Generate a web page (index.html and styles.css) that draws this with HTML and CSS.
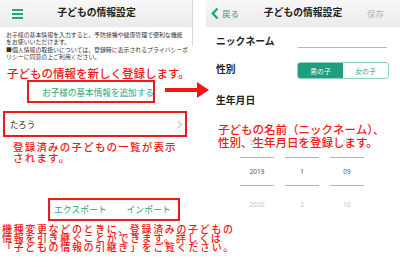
FILE: index.html
```html
<!DOCTYPE html>
<html lang="ja">
<head>
<meta charset="utf-8">
<link rel="stylesheet" href="styles.css">
</head>
<body>
<div class="stage">
  <section class="screen left">
    <header class="bar">
      <span class="bar-l">
        <svg class="menu" width="11" height="10" viewBox="0 0 11 10"><rect x="0" y="0" width="11" height="2" fill="#1fa582"/><rect x="0" y="4" width="11" height="2" fill="#1fa582"/><rect x="0" y="8" width="11" height="2" fill="#1fa582"/></svg>
      </span>
      <h1 class="title">子どもの情報設定</h1>
      <span class="bar-r"></span>
    </header>
    <p class="desc">お子様の基本情報を入力すると、予防接種や健康管理で便利な機能<br>をお使いいただけます。<br>■個人情報の取扱いについては、登録時に表示されるプライバシーポ<br>リシーに同意の上ご利用ください。</p>
    <div class="add">お子様の基本情報を追加する</div>
    <div class="child-row">
      <span>たろう</span>
      <svg width="6" height="9" viewBox="0 0 6 9"><polyline points="1,1 4.5,4.5 1,8" fill="none" stroke="#c4c4c4" stroke-width="1.2"/></svg>
    </div>
    <div class="links">
      <span>エクスポート</span>
      <span>インポート</span>
    </div>
    <div class="scroll"></div>
  </section>

  <section class="screen right">
    <header class="bar">
      <span class="bar-l back">
        <svg width="8" height="13" viewBox="0 0 8 13"><polyline points="6.5,1.5 1.8,6.5 6.5,11.5" fill="none" stroke="#1fa582" stroke-width="2.4"/></svg>
        <span>戻る</span>
      </span>
      <h1 class="title">子どもの情報設定</h1>
      <span class="bar-r save">保存</span>
    </header>
    <div class="row r1">
      <span class="label">ニックネーム</span>
      <span class="input"></span>
    </div>
    <div class="row r2">
      <span class="label">性別</span>
      <span class="seg"><span class="on">男の子</span><span class="off">女の子</span></span>
    </div>
    <div class="row r3">
      <span class="label">生年月日</span>
    </div>
    <div class="picker">
      <div class="col"><span class="item">2018</span><span class="sel">2019</span><span class="item next">2020</span></div>
      <div class="col"><span class="item">12</span><span class="sel">1</span><span class="item next">2</span></div>
      <div class="col"><span class="item">08</span><span class="sel">09</span><span class="item next">10</span></div>
    </div>
  </section>

  <div class="note n1">子どもの情報を新しく登録します。</div>
  <div class="note n2">登録済みの子どもの一覧が表示<br>されます。</div>
  <div class="note n3">機種変更などのときに、登録済みの子どもの<br>情報を引き継ぐことができます。詳しくは<br>「子どもの情報の引継ぎ」をご覧ください。</div>
  <div class="note n4">子どもの名前（ニックネーム）、<br>性別、生年月日を登録します。</div>
  <div class="box b1"></div>
  <div class="box b2"></div>
  <div class="box b3"></div>
  <div class="arrow"></div>
</div>
</body>
</html>
```

FILE: styles.css
```css
* { box-sizing: border-box; margin: 0; padding: 0; }
html, body { width: 400px; height: 267px; overflow: hidden; background: #fff; }
body { font-family: "Noto Sans CJK JP", "Noto Sans", sans-serif; color: #222; }

.stage { position: relative; width: 400px; height: 267px; display: flex; gap: 13px; }
.screen { position: relative; height: 267px; background: #fff; }
.screen.left { width: 193px; }
.screen.right { width: 194px; }

.bar {
  height: 26px;
  display: grid;
  grid-template-columns: 1fr auto 1fr;
  align-items: center;
  background: linear-gradient(#f8f8f8, #ebebeb);
  box-shadow: 0 1px 1px rgba(0,0,0,0.07);
}
.title { font-size: 9.8px; font-weight: 700; line-height: 1; color: #222; letter-spacing: 0; }
.bar-l { display: flex; align-items: center; }
.menu { margin-left: 12px; margin-top: 1px; }
.back { padding-left: 5px; gap: 3px; color: #1fa582; font-size: 8.5px; }
.back span { line-height: 1; }
.save { justify-self: end; padding-right: 16px; color: #b5b5b5; font-size: 8.5px; line-height: 1; }

.scroll { position: absolute; right: 0; top: 0; width: 1px; height: 46px; background: #d8d8d8; }

.desc { margin-top: 5px; padding-left: 6px; font-size: 5.9px; line-height: 7.3px; color: #333; white-space: nowrap; }

.add { margin-top: 20px; height: 23px; display: flex; align-items: center; justify-content: center; padding-left: 3px; color: #27a585; font-size: 8.6px; }

.child-row { margin-top: 8px; height: 26px; display: flex; align-items: center; justify-content: space-between; padding: 0 10px 0 10px; font-size: 8.6px; color: #333; }

.links { margin-top: 61px; height: 23px; display: flex; align-items: center; gap: 20px; padding-left: 54px; color: #27a585; font-size: 8.8px; }

.row { height: 24px; display: flex; align-items: center; padding-left: 10px; position: relative; }
.r1 { margin-top: 4px; }
.r2 { margin-top: 4px; }
.r3 { margin-top: 7px; }
.label { font-size: 9.8px; font-weight: 700; color: #222; line-height: 1; }
.input { position: absolute; left: 92px; top: 17px; width: 89px; height: 1px; background: #b8b8b8; }
.seg { position: absolute; left: 91px; top: 4px; width: 92px; height: 17px; display: flex; border: 1px solid #8fd3c0; border-radius: 3px; overflow: hidden; font-size: 6.8px; }
.seg span { flex: 1; display: flex; align-items: center; justify-content: center; }
.seg .on { background: #1ea07f; color: #fff; }
.seg .off { color: #2aa686; }

.picker { margin-top: 14px; padding-left: 34px; display: flex; gap: 11px; font-family: "Noto Sans", sans-serif; font-size: 6.4px; }
.col { width: 34px; display: flex; flex-direction: column; align-items: stretch; text-align: center; }
.item { height: 30px; display: flex; align-items: center; justify-content: center; color: #c2c2c2; }
.item.next { padding-top: 6px; }
.sel { height: 29px; display: flex; align-items: center; justify-content: center; border-top: 1.5px solid #b3b3b3; border-bottom: 1.5px solid #b3b3b3; color: #555; }

.note { position: absolute; color: #f01818; font-size: 11.5px; font-weight: 500; white-space: nowrap; line-height: 11px; }
.n1 { left: 7px; top: 67.5px; }
.n2 { left: 13px; top: 141px; font-size: 10.5px; letter-spacing: 1.2px; }
.n3 { left: 2px; top: 223.5px; font-size: 10px; letter-spacing: 1.65px; line-height: 9px; }
.n4 { left: 218px; top: 122.5px; line-height: 13px; }

.box { position: absolute; border: 2px solid #f01818; }
.b1 { left: 27px; top: 80px; width: 128px; height: 23px; }
.b2 { left: 3px; top: 111px; width: 184px; height: 26px; }
.b3 { left: 48px; top: 198px; width: 132px; height: 23px; }

.arrow { position: absolute; left: 165px; top: 88px; width: 35px; height: 4px; background: #f01818; }
.arrow::after { content: ""; position: absolute; left: 32px; top: -6px; border-left: 12px solid #f01818; border-top: 8px solid transparent; border-bottom: 8px solid transparent; }
```
